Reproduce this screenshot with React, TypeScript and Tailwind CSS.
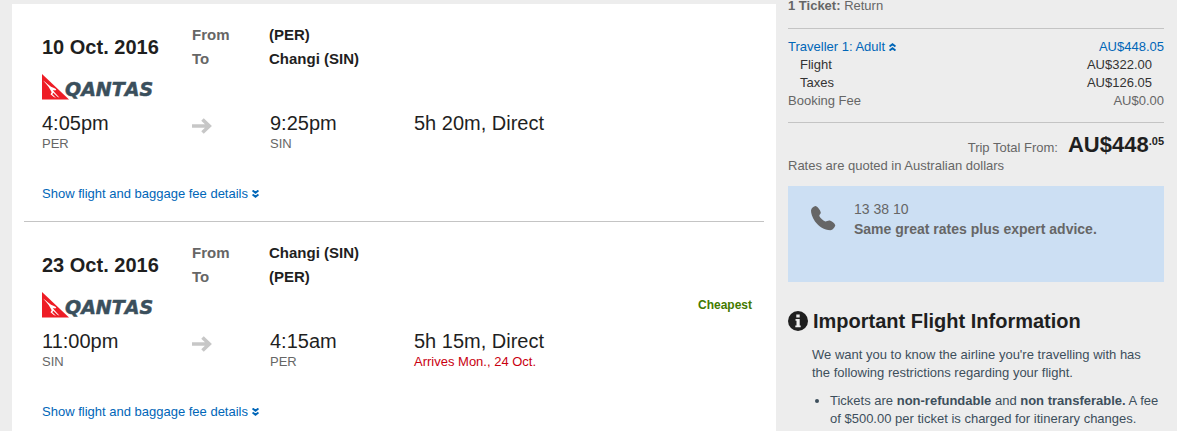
import * as React from "react";

interface Leg {
  date: string,
  from: string,
  to: string,
  departTime: string,
  departCode: string,
  arriveTime: string,
  arriveCode: string,
  duration: string,
  note?: string,
  badge?: string,
}

const legs: Leg[] = [
  {
    date: "10 Oct. 2016",
    from: "(PER)",
    to: "Changi (SIN)",
    departTime: "4:05pm",
    departCode: "PER",
    arriveTime: "9:25pm",
    arriveCode: "SIN",
    duration: "5h 20m, Direct",
  },
  {
    date: "23 Oct. 2016",
    from: "Changi (SIN)",
    to: "(PER)",
    departTime: "11:00pm",
    departCode: "SIN",
    arriveTime: "4:15am",
    arriveCode: "PER",
    duration: "5h 15m, Direct",
    note: "Arrives Mon., 24 Oct.",
    badge: "Cheapest",
  },
];

const QantasLogo = () => (
  <svg width="118" height="26" viewBox="0 0 118 26" role="img" aria-label="Qantas">
    <path d="M0 0 L27 25.500 H0Z" fill="#ee1c25" />
    {/* Kangaroo */}
    <path
      d="M1 6.500 C4 8.500 6.500 11 9 12.700 L12 14 L14.300 15.300 L13.300 16.400 L10.800 16 L12.500 18.200 L17.500 23.800 L15.500 22.800 L11.300 18.800 L10.300 20.300 L14 24 L11.500 22.800 L8.500 20.300 L9.700 18.300 L8 15.200 C6.500 12.500 4 9.500 1 6.500Z"
      fill="#fff"
    />
    <text
      x="23"
      y="22"
      fill="#3a4f5c"
      stroke="#3a4f5c"
      strokeWidth="0.5"
      fontFamily="'DejaVu Sans', sans-serif"
      fontSize="19"
      fontWeight="700"
      fontStyle="italic"
      className="[font-kerning:none]"
    >
      QANTAS
    </text>
  </svg>
);

const ArrowIcon = () => (
  <svg width="20" height="16" viewBox="0 0 20 16" fill="none" stroke="#c7c7c7" strokeWidth="3.600" aria-hidden="true">
    <path d="M0 8 H17 M10.500 1.500 L17.300 8 L10.500 14.500" />
  </svg>
);

const DoubleChevron = ({ up = false }: { up?: boolean }) => (
  <svg
    className={up ? "rotate-180" : ""}
    width="7"
    height="8"
    viewBox="0 0 7 8"
    fill="none"
    stroke="currentColor"
    strokeWidth="2"
    aria-hidden="true"
  >
    <path d="M0.500 0.500 L3.500 2.700 L6.500 0.500 M0.500 4.500 L3.500 6.700 L6.500 4.500" />
  </svg>
);

const PhoneIcon = () => (
  <svg width="25" height="25" viewBox="0 0 25 25" fill="#666" aria-hidden="true">
    <path d="M4.700 0 C2.500 .3 .3 2.200 0 4.500 C0 7 1 11 4 15.500 C8 20.500 13 24 19.500 24.200 C21.500 24 23.800 21.500 24.300 19.200 C23.300 17 21 15.200 18.800 14.600 C17 14.300 15.500 15.500 14.300 15.400 C12 14.500 9 12 8.300 10 C8.200 8.800 9.900 8 9.800 6.600 C9.200 4 7 1 4.700 0Z" />
  </svg>
);

const InfoIcon = () => (
  <svg width="20" height="20" viewBox="0 0 20 20" aria-hidden="true">
    <circle cx="10" cy="10" r="10" fill="#1f1f1f" />
    <path d="M8.300 3.500 H11.700 V6.500 H8.300Z M7.500 8 H11.700 V14.500 H12.700 V16.300 H7.300 V14.500 H8.500 V9.700 H7.500Z" fill="#ededed" />
  </svg>
);

const FlightLeg = ({ leg }: { leg: Leg }) => (
  <article className="mx-3 border-b border-[#c4c4c4] pt-[19px] pb-[18px] pl-[18px] pr-3 last:border-b-0">
    <div className="grid grid-cols-[150px_77px_1fr] items-center">
      <h2 className="text-[20px] leading-6 font-bold">{leg.date}</h2>
      <dl className="col-span-2 grid grid-cols-[77px_1fr] text-[15px] leading-6 font-bold">
        <dt className="text-[#666]">From</dt>
        <dd>{leg.from}</dd>
        <dt className="text-[#666]">To</dt>
        <dd>{leg.to}</dd>
      </dl>
    </div>

    <div className="mt-[3px] flex h-[26px] items-center justify-between">
      <QantasLogo />
      {leg.badge && (
        <span className="text-[12px] leading-4 font-bold text-[#437a00]">{leg.badge}</span>
      )}
    </div>

    <div className="mt-[11px] grid grid-cols-[150px_78px_144px_1fr] text-[20px] leading-6">
      <div>
        <p>{leg.departTime}</p>
        <p className="text-[13px] leading-[18px] text-[#666]">{leg.departCode}</p>
      </div>
      <div className="pt-[7px]">
        <ArrowIcon />
      </div>
      <div>
        <p>{leg.arriveTime}</p>
        <p className="text-[13px] leading-[18px] text-[#666]">{leg.arriveCode}</p>
      </div>
      <div>
        <p>{leg.duration}</p>
        {leg.note && <p className="text-[13px] leading-[18px] text-[#c90010]">{leg.note}</p>}
      </div>
    </div>

    <button type="button" className="mt-8 flex items-center gap-1 text-[13px] leading-[18px] text-[#0066b8]">
      Show flight and baggage fee details
      <DoubleChevron />
    </button>
  </article>
);

const TripSummary = () => (
  <aside className="w-[376px] shrink-0 text-[13px] leading-[18px] text-[#666]">
    <p className="leading-3">
      <strong>1 Ticket:</strong> Return
    </p>

    {/* Fare breakdown */}
    <div className="mt-4 border-y border-[#c4c4c4] pt-[9px] pb-3">
      <table className="w-full">
        <tbody>
          <tr className="text-[#0066b8]">
            <th scope="row" className="p-0 text-left font-normal">
              <button type="button" className="flex items-center gap-1">
                Traveller 1: Adult
                <DoubleChevron up />
              </button>
            </th>
            <td className="p-0 text-right">AU$448.05</td>
          </tr>
          <tr className="text-[#333]">
            <th scope="row" className="py-0 pl-3 text-left font-normal">Flight</th>
            <td className="py-0 pr-3 text-right">AU$322.00</td>
          </tr>
          <tr className="text-[#333]">
            <th scope="row" className="py-0 pl-3 text-left font-normal">Taxes</th>
            <td className="py-0 pr-3 text-right">AU$126.05</td>
          </tr>
          <tr>
            <th scope="row" className="p-0 text-left font-normal">Booking Fee</th>
            <td className="p-0 text-right">AU$0.00</td>
          </tr>
        </tbody>
      </table>
    </div>

    <div className="mt-2.5 flex items-baseline justify-end gap-2.5">
      <span>Trip Total From:</span>
      <strong className="flex items-start text-[22px] leading-6 text-[#1f1f1f]">
        AU$448<span className="text-[11px] leading-4">.05</span>
      </strong>
    </div>
    <p>Rates are quoted in Australian dollars</p>

    {/* Phone booking */}
    <section className="mt-[11px] flex min-h-24 items-start bg-[#ccdff3] pt-[13px] pl-[23px] text-[14px] leading-5">
      <div className="w-[43px] shrink-0 pt-[7px]">
        <PhoneIcon />
      </div>
      <div>
        <p>13 38 10</p>
        <p className="font-bold">Same great rates plus expert advice.</p>
      </div>
    </section>

    <section className="pt-[27px] text-[#3d4f5c]">
      <h2 className="flex items-center gap-[5px] text-[20px] leading-6 font-bold text-[#1f1f1f]">
        <InfoIcon />
        Important Flight Information
      </h2>
      <p className="mt-[13px] pr-3 pl-6">
        We want you to know the airline you&apos;re travelling with has the following restrictions regarding your flight.
      </p>
      <ul className="mt-2.5 list-disc pl-[42px] pb-[3px]">
        <li>
          Tickets are <strong>non-refundable</strong> and <strong>non transferable.</strong> A fee of $500.00 per
          ticket is charged for itinerary changes.
        </li>
      </ul>
    </section>
  </aside>
);

const App = () => {
  return (
    <div className="flex min-h-screen gap-3 bg-[#ededed] pr-[13px] pl-3 font-['Liberation_Sans',Arial,sans-serif] text-[#1f1f1f]">
      <main className="mt-1 min-w-0 flex-1 bg-white">
        {legs.map((leg) => (
          <FlightLeg key={leg.date} leg={leg} />
        ))}
      </main>
      <TripSummary />
    </div>
  );
};

export default App;
